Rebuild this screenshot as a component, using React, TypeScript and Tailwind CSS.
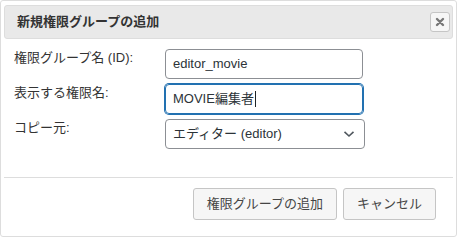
const FONT = "font-['Liberation_Sans','Noto_Sans_CJK_JP',sans-serif]";

function Row({ label, children }: { label: string; children: React.ReactNode }) {
  return (
    <div className="flex items-start">
      <div className="w-[151px] shrink-0 text-[13px] leading-[18px] text-[#333333]">{label}</div>
      {children}
    </div>
  );
}

export default function App() {
  return (
    <div className={`w-[457px] h-[237px] bg-white ${FONT}`}>
      <div className="h-full border border-[#dddddd] rounded-[3px] px-[3px] pt-[4px] flex flex-col">
        {/* Title bar */}
        <div className="h-[34px] shrink-0 flex items-center justify-between border border-[#dddddd] bg-[#e9e9e9] rounded-[3px] pl-[12px] pr-[2px]">
          <span className="text-[13px] font-bold text-[#333333]">新規権限グループの追加</span>
          <button
            className="w-[20px] h-[20px] flex items-center justify-center border border-[#c5c5c5] bg-[#f6f6f6] rounded-[3px]"
            aria-label="close"
          >
            <svg width="10" height="10" viewBox="0 0 10 10" aria-hidden="true">
              <path d="M2 2 L8 8 M8 2 L2 8" stroke="#777777" strokeWidth="2.4" strokeLinecap="round" />
            </svg>
          </button>
        </div>

        {/* Content */}
        <div className="h-[138px] shrink-0 pt-[10px] pl-[10px] flex flex-col gap-[5px]">
          <Row label="権限グループ名 (ID):">
            <div className="w-[198px] h-[30px] flex items-center pl-[7px] border border-[#8c8f94] rounded-[4px] text-[13px] text-[#2c3338]">
              editor_movie
            </div>
          </Row>
          <Row label="表示する権限名:">
            <div className="w-[198px] h-[30px] flex items-center pl-[7px] border border-[#2271b1] shadow-[0_0_0_1px_#2271b1] rounded-[4px] text-[13px] text-[#2c3338]">
              MOVIE編集者
              <span className="inline-block w-px h-[16px] bg-[#1d2327] ml-px" />
            </div>
          </Row>
          <Row label="コピー元:">
            <div className="w-[200px] h-[30px] flex items-center justify-between pl-[7px] pr-[9px] border border-[#8c8f94] rounded-[4px] text-[13px] text-[#2c3338]">
              <span>エディター (editor)</span>
              <svg width="12" height="8" viewBox="0 0 12 8" aria-hidden="true">
                <path d="M1.5 1.8 L6 6 L10.5 1.8" fill="none" stroke="#50575e" strokeWidth="1.6" />
              </svg>
            </div>
          </Row>
        </div>

        {/* Button pane */}
        <div className="flex-1 border-t border-[#dddddd] pt-[10px] pr-[17px] flex justify-end items-start gap-[6px]">
          <button className="h-[32px] px-[13px] border border-[#c5c5c5] bg-[#f6f6f6] rounded-[3px] text-[13px] text-[#454545]">
            権限グループの追加
          </button>
          <button className="h-[32px] px-[13px] border border-[#c5c5c5] bg-[#f6f6f6] rounded-[3px] text-[13px] text-[#454545]">
            キャンセル
          </button>
        </div>
      </div>
    </div>
  );
}
